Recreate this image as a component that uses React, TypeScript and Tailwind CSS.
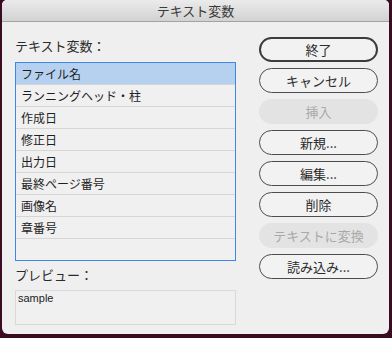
import React from "react";

const items = [
  "ファイル名",
  "ランニングヘッド・柱",
  "作成日",
  "修正日",
  "出力日",
  "最終ページ番号",
  "画像名",
  "章番号",
  "",
];

const font = { fontFamily: '"Noto Sans CJK JP", "Noto Sans", sans-serif' };

function Btn({ label, kind }: { label: string; kind?: "default" | "disabled" }) {
  if (kind === "disabled") {
    return (
      <div className="h-[25px] rounded-full bg-[#e3e3e3] text-[#a9a9a9] text-[13px] flex items-center justify-center leading-none">
        {label}
      </div>
    );
  }
  return (
    <div
      className={
        "h-[25px] rounded-full bg-[#f2f2f2] text-[#2b2b2b] text-[13px] flex items-center justify-center leading-none " +
        (kind === "default" ? "border-2 border-[#3c3c3c]" : "border border-[#4d4d4d]")
      }
    >
      {label}
    </div>
  );
}

export default function App() {
  return (
    <div className="w-[392px] h-[338px] bg-[#3b0b22] pl-[2px] pr-[3px] pb-[4px]" style={font}>
      <div className="w-full h-full bg-[#efefef] rounded-t-[5px] rounded-b-[6px] overflow-hidden flex flex-col">
        <div className="h-[22px] shrink-0 bg-gradient-to-b from-[#ebebeb] to-[#d2d2d2] border-b border-[#a3a3a3] flex items-center justify-center text-[13px] text-[#3a3a3a] leading-none">
          テキスト変数
        </div>
        <div className="flex pl-[13px]">
          <div className="w-[221px] pt-[16px] flex flex-col">
            <div className="h-[16px] text-[13px] leading-[16px] text-[#2b2b2b]">テキスト変数：</div>
            <div className="mt-[8px] h-[199px] border border-[#3d87ea] bg-[#f0f0f0] flex flex-col">
              {items.map((t, i) => (
                <div
                  key={i}
                  className={
                    "pl-[5px] text-[12px] text-[#1e1e1e] flex items-center leading-none " +
                    (i < items.length - 1 ? "h-[22px] border-b border-[#d6d6d6] " : "h-[21px] ") +
                    (i === 0 ? "bg-[#b5d1ef]" : "")
                  }
                >
                  {t}
                </div>
              ))}
            </div>
            <div className="mt-[6px] h-[16px] text-[13px] leading-[16px] text-[#2b2b2b]">プレビュー：</div>
            <div className="mt-[7px] h-[35px] border border-[#d9d9d9] bg-[#f0f0f0] pl-[2px] pt-[1px]">
              <div className="text-[11px] leading-[13px] text-[#222]" style={{ fontFamily: '"Liberation Sans", sans-serif' }}>
                sample
              </div>
            </div>
          </div>
          <div className="ml-[23px] w-[119px] pt-[15px] flex flex-col gap-[6px]">
            <Btn label="終了" kind="default" />
            <Btn label="キャンセル" />
            <Btn label="挿入" kind="disabled" />
            <Btn label="新規..." />
            <Btn label="編集..." />
            <Btn label="削除" />
            <Btn label="テキストに変換" kind="disabled" />
            <Btn label="読み込み..." />
          </div>
        </div>
      </div>
    </div>
  );
}
